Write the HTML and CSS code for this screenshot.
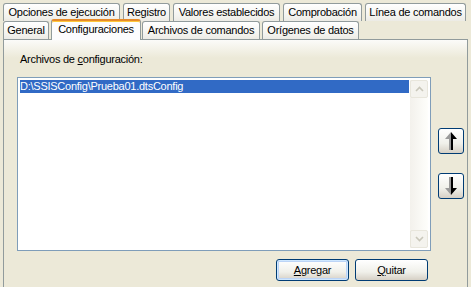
FILE: index.html
```html
<!DOCTYPE html>
<html lang="es">
<head>
<meta charset="UTF-8">
<title>Configuraciones</title>
<link rel="stylesheet" href="styles.css">
</head>
<body>
<div class="dialog">
  <div class="tab-row row-back">
    <div class="tab tab-opciones">Opciones de ejecución</div>
    <div class="tab tab-registro">Registro</div>
    <div class="tab tab-valores">Valores establecidos</div>
    <div class="tab tab-comprobacion">Comprobación</div>
    <div class="tab tab-linea">Línea de comandos</div>
  </div>
  <div class="tab-row row-front">
    <div class="tab tab-general">General</div>
    <div class="tab tab-config active">Configuraciones</div>
    <div class="tab tab-archivos">Archivos de comandos</div>
    <div class="tab tab-origenes">Orígenes de datos</div>
  </div>
  <div class="panel">
    <div class="field-label">Archivos de <u>c</u>onfiguración:</div>
    <div class="list-area">
      <div class="listbox">
        <div class="items">
          <div class="item selected">D:\SSISConfig\Prueba01.dtsConfig</div>
        </div>
        <div class="scrollbar">
          <div class="sb-btn">
            <svg width="9" height="6" viewBox="0 0 9 6"><path d="M1 5 L4.5 1.5 L8 5" fill="none" stroke="#c9c7ba" stroke-width="1.6"/></svg>
          </div>
          <div class="sb-track"></div>
          <div class="sb-btn">
            <svg width="9" height="6" viewBox="0 0 9 6"><path d="M1 1 L4.5 4.5 L8 1" fill="none" stroke="#c9c7ba" stroke-width="1.6"/></svg>
          </div>
        </div>
      </div>
      <div class="side-buttons">
        <button class="btn move-btn">
          <svg width="12" height="18" viewBox="0 0 12 18">
            <polygon points="6,0 0,7 4,7 4,18 6,18" fill="#9a9a9a"/>
            <polygon points="6,0 12,7 8,7 8,18 6,18" fill="#000"/>
          </svg>
        </button>
        <button class="btn move-btn">
          <svg width="12" height="18" viewBox="0 0 12 18">
            <polygon points="6,18 0,11 4,11 4,0 6,0" fill="#9a9a9a"/>
            <polygon points="6,18 12,11 8,11 8,0 6,0" fill="#000"/>
          </svg>
        </button>
      </div>
    </div>
    <div class="actions">
      <button class="btn default"><u>A</u>gregar</button>
      <button class="btn"><u>Q</u>uitar</button>
    </div>
  </div>
</div>
</body>
</html>
```

FILE: styles.css
```css
body {
  margin: 0;
  background: #ece9d8;
  font-family: Tahoma, "Liberation Sans", "DejaVu Sans", sans-serif;
  font-size: 11px;
  letter-spacing: -0.25px;
  color: #000;
}
.dialog {
  width: 471px;
  height: 287px;
  padding: 3px 3px 0 3px;
  box-sizing: border-box;
  display: flex;
  flex-direction: column;
}
.tab-row {
  display: flex;
  height: 18px;
}
.row-back {
  gap: 3px;
}
.row-front {
  position: relative;
  z-index: 2;
}
.tab {
  height: 18px;
  box-sizing: border-box;
  padding-top: 2px;
  text-align: center;
  border: 1px solid #919b9c;
  border-bottom: none;
  border-radius: 3px 3px 0 0;
  background: linear-gradient(#ffffff, #f3f3ef 70%, #ecebe5);
  white-space: nowrap;
  overflow: hidden;
}
.tab-opciones { width: 117px; }
.tab-registro { width: 47px; }
.tab-valores { width: 107px; }
.tab-comprobacion { width: 79px; }
.tab-linea { width: 101px; }
.tab-general { width: 46px; }
.tab-config { width: 90px; }
.tab-archivos { width: 118px; }
.tab-origenes { width: 97px; }
.row-front .tab {
  margin-right: 2px;
}
.row-front .tab.active {
  height: 21px;
  margin-top: -2px;
  margin-right: 1px;
  border-top: 2px solid #e68b2c;
  box-shadow: inset 0 1px 0 #ffc83c;
  background: #fcfcfe;
}
.panel {
  flex: 1;
  border: 1px solid #919b9c;
  border-bottom: none;
  background: linear-gradient(#fbfbf9, #ece9d8 18px);
  padding: 13px 0 0 13px;
  display: flex;
  flex-direction: column;
}
.field-label {
  padding-left: 3px;
  height: 24px;
}
.list-area {
  display: flex;
  align-items: flex-start;
}
.listbox {
  width: 414px;
  height: 174px;
  box-sizing: border-box;
  border: 1px solid #7f9db9;
  background: #fff;
  display: flex;
  padding: 2px;
}
.items {
  flex: 1;
}
.item {
  height: 13px;
  line-height: 13px;
}
.item.selected {
  background: #316ac5;
  color: #fff;
}
.scrollbar {
  width: 18px;
  margin-left: 1px;
  display: flex;
  flex-direction: column;
  background: linear-gradient(to right, #f3f1ec, #fefefb);
}
.sb-btn {
  height: 18px;
  box-sizing: border-box;
  border: 1px solid #e8e6dc;
  border-radius: 2px;
  background: #f4f3ee;
  display: flex;
  align-items: center;
  justify-content: center;
}
.sb-track {
  flex: 1;
}
.side-buttons {
  display: flex;
  flex-direction: column;
  gap: 19px;
  margin-left: 7px;
  margin-top: 51px;
}
.btn {
  font-family: inherit;
  font-size: 11px;
  letter-spacing: -0.25px;
  color: #000;
  border: 1px solid #003c74;
  border-radius: 3px;
  background: linear-gradient(#ffffff, #f0f0ea 60%, #d6d0c5);
  padding: 0;
  box-sizing: border-box;
}
.move-btn {
  width: 26px;
  height: 26px;
  display: flex;
  align-items: center;
  justify-content: center;
}
.actions {
  display: flex;
  gap: 6px;
  margin: 8px 0 0 259px;
}
.actions .btn {
  width: 73px;
  height: 22px;
}
.btn.default {
  box-shadow: inset 0 0 0 1px #cee7ff, inset 0 0 0 2px #bcd4f6;
}
```
